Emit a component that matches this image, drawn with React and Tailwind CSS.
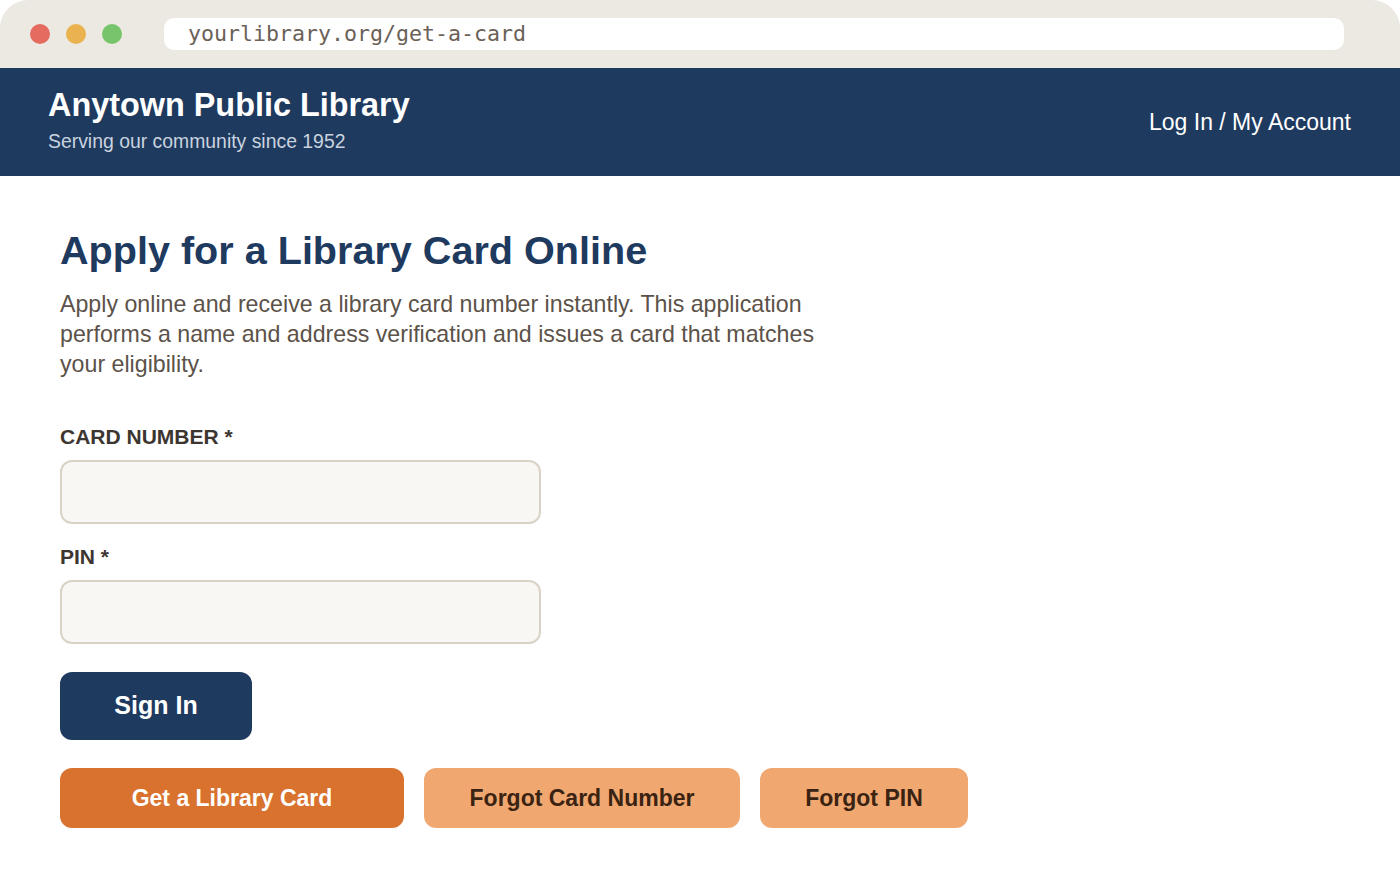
import React from "react";

const sans = { fontFamily: '"Liberation Sans", Arial, sans-serif' };

const Field = ({ label, className }) => (
  <div className={className}>
    <label className="block text-[21px] font-bold text-[#3d3530] leading-[24px] mb-[11px]">{label}</label>
    <input
      type="text"
      className="block w-[481px] h-[64px] rounded-[12px] border-2 border-[#dad2c6] bg-[#f9f7f3] px-4 outline-none"
    />
  </div>
);

export default function App() {
  return (
    <div className="w-[1400px] h-[880px] bg-white overflow-hidden" style={sans}>
      {/* browser chrome */}
      <div className="h-[68px] bg-[#ece9e3] rounded-t-[28px] flex items-center pl-[30px] pr-[56px]">
        <div className="flex gap-4">
          <span className="w-5 h-5 rounded-full bg-[#e56b60]" />
          <span className="w-5 h-5 rounded-full bg-[#ebb34f]" />
          <span className="w-5 h-5 rounded-full bg-[#77c56a]" />
        </div>
        <div className="ml-[42px] flex-1 h-[32px] bg-white rounded-[10px] flex items-center pl-6">
          <span className="text-[21.6px] text-[#6b6157]" style={{ fontFamily: '"DejaVu Sans Mono", "Liberation Mono", monospace' }}>
            yourlibrary.org/get-a-card
          </span>
        </div>
      </div>

      {/* header */}
      <header className="h-[108px] bg-[#1f3a5f] flex justify-between px-12 pt-[18px]">
        <div>
          <h1 className="text-[32.4px] font-bold text-white leading-[38px]">Anytown Public Library</h1>
          <p className="text-[19.4px] text-[#c9d3df] mt-[5px] leading-[24px]">Serving our community since 1952</p>
        </div>
        <a className="self-center -mt-[18px] text-[23px] text-white pr-[1px]">Log In / My Account</a>
      </header>

      {/* main */}
      <main className="px-[60px] pt-[50px]">
        <h2 className="text-[39.6px] font-bold text-[#1f3a5f] leading-[48px]">Apply for a Library Card Online</h2>
        <p className="mt-[15px] w-[800px] text-[23.2px] leading-[30px] text-[#5c5249]">
          Apply online and receive a library card number instantly. This application performs a name and address verification and issues a card that matches your eligibility.
        </p>

        <Field label="CARD NUMBER *" className="mt-[46px]" />
        <Field label="PIN *" className="mt-[21px]" />

        <button className="mt-[28px] w-[192px] h-[68px] rounded-[12px] bg-[#1f3a5f] text-white text-[25px] font-bold">
          Sign In
        </button>

        <div className="mt-[28px] flex gap-5">
          <button className="w-[344px] h-[60px] rounded-[12px] bg-[#d9722e] text-white text-[23px] font-bold">
            Get a Library Card
          </button>
          <button className="w-[316px] h-[60px] rounded-[12px] bg-[#f0a870] text-[#3a2312] text-[23px] font-bold">
            Forgot Card Number
          </button>
          <button className="w-[208px] h-[60px] rounded-[12px] bg-[#f0a870] text-[#3a2312] text-[23px] font-bold">
            Forgot PIN
          </button>
        </div>
      </main>
    </div>
  );
}
